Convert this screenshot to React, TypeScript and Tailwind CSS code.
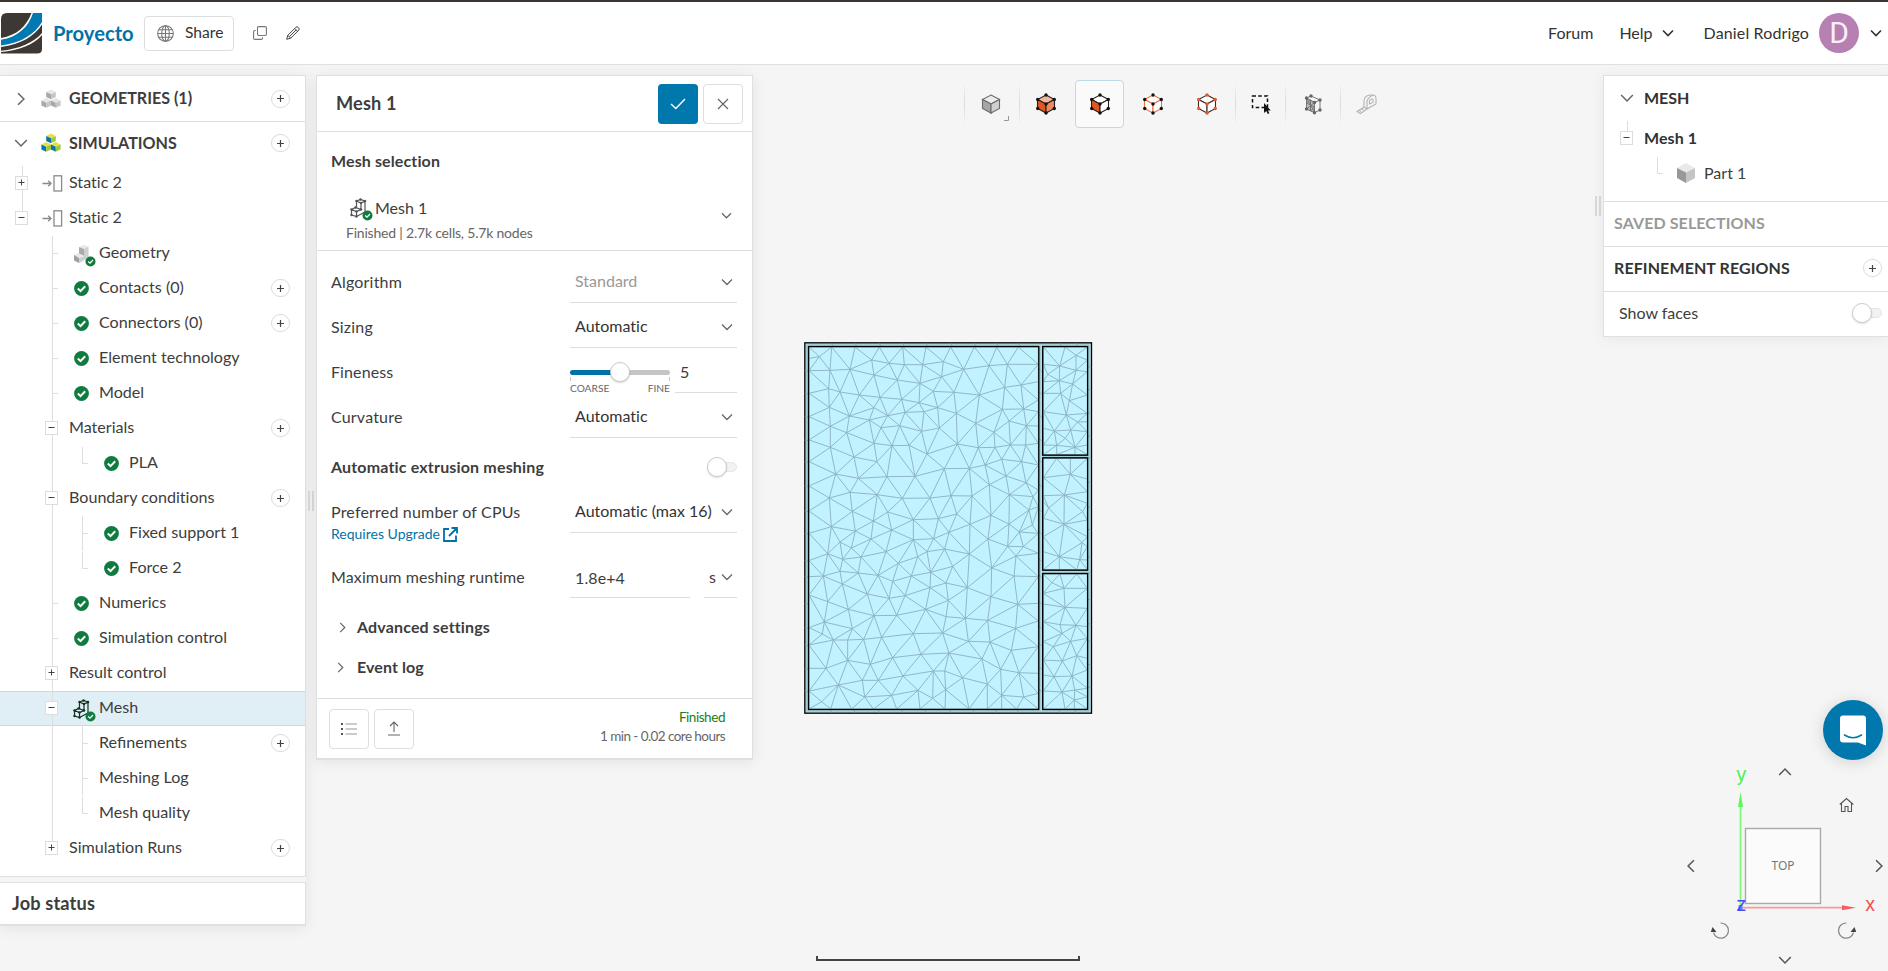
import React from "react";

type Pt = [number, number];

/* ---------- mesh geometry ---------- */

const MAIN: Pt[] = [
  [57,51],[125,51],[195,51],[268,51],[338,51],[408,51],[482,51],[553,51],[620,51],[685,51],[745,51],
  [57,85],[57,122],[57,190],[57,260],[57,330],[57,395],[57,468],[57,543],[57,610],[57,692],[57,740],[57,795],[57,893],[57,945],[57,1015],[57,1083],[57,1137],
  [745,103],[745,155],[745,210],[745,245],[745,288],[745,340],[745,405],[745,480],[745,530],[745,610],[745,670],[745,740],[745,820],[745,873],[745,950],[745,1030],[745,1090],
  [122,1137],[185,1137],[250,1137],[320,1137],[390,1137],[465,1137],[537,1137],[592,1137],[635,1137],[680,1137],[745,1137],
  [88,80],[120,121],[180,118],[245,90],[297,100],[252,135],[343,104],[398,104],[460,95],[322,150],[455,140],[390,160],[521,118],[597,107],[652,103],[644,172],[693,165],
  [116,176],[150,186],[208,195],[270,202],[335,208],[387,218],[430,184],[492,187],[568,195],
  [118,232],[178,258],[252,233],[293,257],[345,247],[402,245],[443,233],[499,250],[637,238],[701,237],
  [121,289],[170,308],[238,270],[273,293],[329,287],[395,304],[448,294],[557,280],[657,273],[612,307],[709,287],
  [121,352],[192,381],[252,340],[306,347],[357,346],[411,372],[502,342],[565,353],[615,352],[661,345],[707,345],
  [261,395],[137,432],[205,445],[291,440],[375,439],[463,416],[538,415],[585,405],[635,388],[695,395],[648,438],[598,464],[708,458],
  [118,504],[180,487],[262,494],[337,505],[420,504],[483,497],[546,498],[658,494],[729,500],
  [187,544],[293,546],[250,573],[124,590],[196,603],[370,569],[445,566],[500,552],[603,556],[717,540],[540,583],[305,600],[657,582],[727,585],
  [243,627],[150,636],[370,629],[431,626],[477,607],[594,627],[688,606],[653,649],[700,650],
  [113,671],[158,688],[184,654],[213,681],[288,665],[325,700],[383,680],[411,665],[464,657],[538,672],[678,678],[488,709],[605,714],
  [100,738],[150,724],[157,762],[205,729],[264,736],[308,754],[364,738],[422,727],[420,773],[468,759],[532,773],[672,738],
  [113,815],[175,838],[232,792],[297,805],[345,797],[475,811],[407,838],[603,800],[683,823],
  [103,876],[187,896],[252,857],[320,856],[526,865],[468,860],[593,871],[677,895],
  [97,912],[130,930],[173,930],[221,928],[275,922],[370,911],[458,909],[535,934],[600,936],[664,961],
  [108,1015],[173,991],[241,1003],[308,983],[393,973],[477,969],[576,987],[632,1018],[687,1028],
  [145,1065],[217,1051],[265,1051],[339,1038],[430,1023],[464,1023],[518,1043],[592,1062],
  [95,1115],[224,1101],[305,1096],[384,1081],[467,1079],[428,1105],[635,1096],[701,1101],
];

const CELL_TOP: Pt[] = [
  [760,51],[825,51],[892,51],[760,103],[760,155],[760,190],[760,245],[760,295],[760,345],[760,374],
  [892,90],[892,125],[892,195],[892,250],[892,275],[892,305],[892,345],[892,374],[800,374],[855,374],
  [858,76],[809,108],[858,121],[773,133],[808,152],[848,162],[812,190],[838,212],[829,255],[863,276],[842,300],[793,303],[826,325],[800,346],[855,352],
];

const CELL_MID: Pt[] = [
  [760,385],[800,385],[841,385],[892,385],[760,443],[760,497],[760,515],[760,565],[760,620],[760,665],[760,719],
  [892,447],[892,485],[892,520],[892,570],[892,620],[892,650],[892,690],[892,719],[808,719],[860,719],
  [841,433],[823,495],[776,534],[878,545],[822,583],[808,680],[876,638],[869,689],
];

const CELL_BOTTOM: Pt[] = [
  [760,732],[810,732],[860,732],[892,732],[760,790],[760,822],[760,875],[760,935],[760,990],[760,1035],[760,1083],[760,1137],
  [892,775],[892,835],[892,890],[892,925],[892,985],[892,1020],[892,1075],[892,1100],[892,1137],[825,1137],[853,1137],
  [785,758],[822,775],[825,832],[858,886],[810,884],[816,910],[842,934],[790,950],[817,993],[860,977],[792,1040],[846,1038],[816,1086],[853,1110],[854,1080],
];

/* Bowyer-Watson triangulation, returned as one path of unique edges. */
function triangulate(pts: Pt[]): string {
  const n = pts.length;
  const p: Pt[] = [...pts, [-9000, -9000], [11000, -9000], [500, 15000]];
  let tris: number[][] = [[n, n + 1, n + 2]];
  const inside = (t: number[], q: Pt) => {
    const [a, b, c] = t.map((i) => p[i]);
    const d = 2 * (a[0] * (b[1] - c[1]) + b[0] * (c[1] - a[1]) + c[0] * (a[1] - b[1]));
    if (Math.abs(d) < 1e-9) return true;
    const s = (v: Pt) => v[0] * v[0] + v[1] * v[1];
    const ux = (s(a) * (b[1] - c[1]) + s(b) * (c[1] - a[1]) + s(c) * (a[1] - b[1])) / d;
    const uy = (s(a) * (c[0] - b[0]) + s(b) * (a[0] - c[0]) + s(c) * (b[0] - a[0])) / d;
    return Math.hypot(q[0] - ux, q[1] - uy) < Math.hypot(a[0] - ux, a[1] - uy) - 1e-7;
  };
  for (let i = 0; i < n; i++) {
    const bad = tris.filter((t) => inside(t, p[i]));
    const count = new Map<string, number[]>();
    const dup = new Set<string>();
    bad.forEach((t) =>
      [[t[0], t[1]], [t[1], t[2]], [t[2], t[0]]].forEach((e) => {
        const k = Math.min(e[0], e[1]) + "-" + Math.max(e[0], e[1]);
        if (count.has(k)) dup.add(k);
        count.set(k, e);
      }),
    );
    tris = tris.filter((t) => !bad.includes(t));
    count.forEach((e, k) => {
      if (!dup.has(k)) tris.push([e[0], e[1], i]);
    });
  }
  const edges = new Set<string>();
  tris
    .filter((t) => t.every((i) => i < n))
    .forEach((t) =>
      [[t[0], t[1]], [t[1], t[2]], [t[2], t[0]]].forEach(([a, b]) =>
        edges.add(Math.min(a, b) + "-" + Math.max(a, b)),
      ),
    );
  return [...edges]
    .map((e) => {
      const [a, b] = e.split("-").map(Number);
      return `M${p[a][0]} ${p[a][1]}L${p[b][0]} ${p[b][1]}`;
    })
    .join("");
}

const MESH_PATH = [MAIN, CELL_TOP, CELL_MID, CELL_BOTTOM].map(triangulate).join("");
const TICKS = [
  ...[125,195,268,338,408,482,553,620,685,810,858].map((x) => `M${x} 40L${x + 5} 50M${x - 4} 1138L${x} 1148`),
  ...[122,190,260,330,395,468,543,610,692,740,820,893,945,1015,1083].map((y) => `M44 ${y}L56 ${y + 2}M893 ${y - 12}L904 ${y - 10}M746 ${y - 6}L757 ${y + 4}`),
].join("");

function MeshView() {
  return (
    <svg width="320" height="400" viewBox="0 0 960 1200" fill="none">
      <rect x="44.5" y="38.5" width="860" height="1111" fill="#b9e9f2" stroke="#000" strokeWidth="4" />
      <path d="M50 44H899V1144H50ZM752 46V1142M758 380H896M758 726H896" stroke="#93bac1" strokeWidth="2" />
      <path d={TICKS} stroke="#7fa5ab" strokeWidth="2" />
      <g fill="#c0f2ff">
        <rect x="55.5" y="49.5" width="691" height="1089" />
        <rect x="758" y="49.5" width="135" height="326" />
        <rect x="758" y="383.5" width="135" height="337" />
        <rect x="758" y="730.5" width="135" height="408" />
      </g>
      <path d={MESH_PATH} stroke="#8db4bd" strokeWidth="2.8" />
      <g stroke="#000" strokeWidth="4.2">
        <rect x="55.5" y="49.5" width="691" height="1089" />
        <rect x="758" y="49.5" width="135" height="326" />
        <rect x="758" y="383.5" width="135" height="337" />
        <rect x="758" y="730.5" width="135" height="408" />
      </g>
    </svg>
  );
}

/* ---------- icons ---------- */

function Chevron({ dir = "down", w = 12, color = "#666", sw = 1.3 }: { dir?: "down" | "right" | "left" | "up"; w?: number; color?: string; sw?: number }) {
  const d = {
    down: "M1 3.5L6 8.5L11 3.5",
    up: "M1 8.5L6 3.5L11 8.5",
    right: "M3.5 1L8.5 6L3.5 11",
    left: "M8.5 1L3.5 6L8.5 11",
  }[dir];
  return (
    <svg width={w} height={w} viewBox="0 0 12 12" fill="none" stroke={color} strokeWidth={sw} className="shrink-0">
      <path d={d} />
    </svg>
  );
}

function Plus() {
  return (
    <span className="flex h-[18px] w-[19px] shrink-0 items-center justify-center rounded-full border border-[#d9dcde] bg-white">
      <svg width="7" height="7" viewBox="0 0 7 7" stroke="#444" strokeWidth="1.2">
        <path d="M3.5 0V7M0 3.5H7" />
      </svg>
    </span>
  );
}

function Check() {
  return (
    <svg width="15" height="15" viewBox="0 0 15 15" fill="none">
      <circle cx="7.5" cy="7.5" r="7.4" fill="#0f7b3f" />
      <path d="M3.8 7.6L6.5 10.1L11.2 5.2" stroke="#fff" strokeWidth="2" />
    </svg>
  );
}

function Badge() {
  return (
    <g>
      <circle cx="17.5" cy="17.5" r="5" fill="#0f7b3f" />
      <path d="M15.2 17.6L17 19.2L20 16" stroke="#fff" strokeWidth="1.3" fill="none" />
    </g>
  );
}

function Cube({ x, y, s, c }: { x: number; y: number; s: number; c: [string, string, string] }) {
  const h = s * 0.5;
  const b = s * 1.05;
  return (
    <g>
      <path d={`M${x} ${y}L${x + s} ${y + h}L${x} ${y + h * 2}L${x - s} ${y + h}Z`} fill={c[0]} />
      <path d={`M${x - s} ${y + h}L${x} ${y + h * 2}V${y + h * 2 + b}L${x - s} ${y + h + b}Z`} fill={c[1]} />
      <path d={`M${x + s} ${y + h}L${x} ${y + h * 2}V${y + h * 2 + b}L${x + s} ${y + h + b}Z`} fill={c[2]} />
    </g>
  );
}

function Cubes({ c }: { c: [string, string, string] }) {
  return (
    <svg width="20" height="20" viewBox="0 0 20 20">
      <Cube x={10} y={0.5} s={4.8} c={c} />
      <Cube x={5.2} y={9} s={4.8} c={c} />
      <Cube x={14.8} y={9} s={4.8} c={c} />
    </svg>
  );
}

function GeometryIcon() {
  return (
    <svg width="24" height="24" viewBox="0 0 24 24">
      <path d="M6 3L10.5 1L15.5 2.5L11 5Z" fill="#e8e8e8" />
      <path d="M6 3L11 5V12L6 10Z" fill="#a9a9a9" />
      <path d="M11 5L15.5 2.5V14L6 19V14L11 12Z" fill="#cfcfcf" />
      <path d="M1 11L5.500 9L11 12L6 14Z" fill="#e8e8e8" />
      <path d="M1 11L6 14V19L1 16.500Z" fill="#a0a0a0" />
      <Badge />
    </svg>
  );
}

function MeshIcon({ color }: { color: string }) {
  return (
    <svg width="24" height="24" viewBox="0 0 24 24" fill="none">
      <g stroke={color} strokeWidth="1.2">
        <path d="M6.500 3L10.500 1.500L15 3L11 5ZM6.500 3V9.500M11 5V11.500M15 3V14L6.500 18.500M1.500 11.500L5.500 9.500L11 11.500L6.500 13.500ZM1.500 11.500V17L6.500 18.500V13.500" />
      </g>
      <g fill={color}>
        {[[6.5,3],[10.5,1.5],[15,3],[11,5],[1.5,11.5],[6.5,13.5],[11,11.5],[6.5,18.5],[1.5,17],[5.5,9.5]].map(([x, y]) => (
          <circle key={`${x}-${y}`} cx={x} cy={y} r="1.200" />
        ))}
      </g>
      <Badge />
    </svg>
  );
}

function StaticIcon() {
  return (
    <svg width="21" height="17" viewBox="0 0 21 17" fill="none" stroke="#8a8a8a" strokeWidth="1.300">
      <path d="M0.500 8.500H9M6.200 5.800L9 8.500L6.200 11.200" />
      <rect x="12" y="0.800" width="7.600" height="15.200" />
    </svg>
  );
}

function Logo() {
  return (
    <svg width="41" height="41" viewBox="0 0 41 41">
      <defs>
        <clipPath id="logo">
          <path d="M6 0H41V36Q41 40.500 36 40.500H0V6Q0 0 6 0Z" />
        </clipPath>
      </defs>
      <g clipPath="url(#logo)">
        <rect width="41" height="41" fill="#fff" />
        <path d="M0 0H30.500C25.500 13 16 22.500 0 25Z" fill="#3e3835" />
        <path d="M32 0H41V9C34 21 20 30 0 32.500V26.800C17 24 27.500 14 32 0Z" fill="#0279b1" />
        <path d="M41 11.500V20C33 29.500 18 36 0 37.800V34C20 31.500 33.500 23 41 11.500Z" fill="#3e3835" />
        <path d="M41 22V41H0V39C18 37.500 33 31.500 41 22Z" fill="#3e3835" />
      </g>
    </svg>
  );
}

/* ---------- tree ---------- */

type Guide = "" | "line" | "tick" | "end" | "plus" | "minus" | "plusEnd" | "minusOnly";

function GuideCell({ g }: { g: Guide }) {
  const box = g.startsWith("plus") || g.startsWith("minus");
  const d = {
    "": "",
    line: "M15.500 0V35",
    tick: "M15.500 0V35M15.500 17.500H21",
    end: "M15.500 1V17.500H21",
    plus: "M15.500 0V35",
    minus: "M15.500 0V35",
    plusEnd: "M15.500 0V17",
    minusOnly: "M15.500 0V17",
  }[g];
  return (
    <svg width="30" height="35" viewBox="0 0 30 35" fill="none" className="shrink-0">
      <path d={d} stroke="#dcdedf" />
      {box && (
        <>
          <rect x="8.500" y="10.500" width="12" height="13" fill="#fff" stroke="#dcdcdc" />
          <path d={g.startsWith("plus") ? "M11.500 16.500H17.500M14.500 13.500V19.500" : "M11.500 16.500H17.500"} stroke="#444" />
        </>
      )}
    </svg>
  );
}

interface Row {
  g: Guide[];
  icon?: "static" | "check" | "geo" | "mesh";
  label: string;
  add?: boolean;
  active?: boolean;
}

const ROWS: Row[] = [
  { g: ["plus"], icon: "static", label: "Static 2" },
  { g: ["minusOnly"], icon: "static", label: "Static 2" },
  { g: ["", "tick"], icon: "geo", label: "Geometry" },
  { g: ["", "tick"], icon: "check", label: "Contacts (0)", add: true },
  { g: ["", "tick"], icon: "check", label: "Connectors (0)", add: true },
  { g: ["", "tick"], icon: "check", label: "Element technology" },
  { g: ["", "tick"], icon: "check", label: "Model" },
  { g: ["", "minus"], label: "Materials", add: true },
  { g: ["", "line", "end"], icon: "check", label: "PLA" },
  { g: ["", "minus"], label: "Boundary conditions", add: true },
  { g: ["", "line", "tick"], icon: "check", label: "Fixed support 1" },
  { g: ["", "line", "end"], icon: "check", label: "Force 2" },
  { g: ["", "tick"], icon: "check", label: "Numerics" },
  { g: ["", "tick"], icon: "check", label: "Simulation control" },
  { g: ["", "plus"], label: "Result control" },
  { g: ["", "minus"], icon: "mesh", label: "Mesh", active: true },
  { g: ["", "line", "tick"], label: "Refinements", add: true },
  { g: ["", "line", "tick"], label: "Meshing Log" },
  { g: ["", "line", "end"], label: "Mesh quality" },
  { g: ["", "plusEnd"], label: "Simulation Runs", add: true },
];

function TreeRow({ row }: { row: Row }) {
  return (
    <div className={row.active ? "flex h-[35px] bg-[#e0eef5] pl-[7px] pr-[15px] shadow-[inset_0_1px_0_#c3dce6,inset_0_-1px_0_#c3dce6]" : "flex h-[35px] pl-[7px] pr-[15px]"}>
      {row.g.map((g, i) => (
        <GuideCell key={i} g={g} />
      ))}
      <div className="flex h-[34px] grow items-center">
        {row.icon && (
          <span className="flex w-[30px] shrink-0 items-center justify-center">
            {row.icon === "static" && <StaticIcon />}
            {row.icon === "check" && <span className="mr-[1px]"><Check /></span>}
            {row.icon === "geo" && <span className="ml-[6px] mt-[5px] shrink-0"><GeometryIcon /></span>}
            {row.icon === "mesh" && <span className="ml-[6px] mt-[5px] shrink-0"><MeshIcon color="#12331f" /></span>}
          </span>
        )}
        <span className={row.label.includes("fi") ? "ml-[2px] grow whitespace-nowrap pb-px [font-variant-ligatures:normal]" : "ml-[2px] grow whitespace-nowrap pb-px"}>{row.label}</span>
        {row.add && <Plus />}
      </div>
    </div>
  );
}

function Sidebar() {
  return (
    <div className="w-[306px] shrink-0">
      <div className="h-[802px] border border-l-0 border-[#e0e0e0] bg-white text-[16.1px]">
        <div className="flex h-[46px] items-center border-b border-[#dedede] pl-[14px] pr-[15px] font-bold">
          <Chevron dir="right" w={14} />
          <span className="ml-[13px]"><Cubes c={["#e6e6e6", "#a8a8a8", "#c6c6c6"]} /></span>
          <span className="ml-[8px] grow pb-px">GEOMETRIES (1)</span>
          <Plus />
        </div>
        <div className="flex h-[44px] items-center pb-[2px] pl-[14px] pr-[15px] font-bold">
          <Chevron w={14} />
          <span className="ml-[13px]"><Cubes c={["#e3e04a", "#0b73ad", "#a4c63f"]} /></span>
          <span className="ml-[8px] grow">SIMULATIONS</span>
          <Plus />
        </div>
        {ROWS.map((r, i) => (
          <TreeRow key={i} row={r} />
        ))}
      </div>
      <div className="mt-[5px] flex h-[44px] items-center border border-b-2 border-l-0 border-[#e0e0e0] bg-white pl-3 text-[18.2px] font-bold tracking-[0.15px]">
        Job status
      </div>
    </div>
  );
}

/* ---------- settings panel ---------- */

function Switch() {
  return (
    <span className="flex h-5 w-[30px] items-center rounded-full">
      <span className="z-10 h-5 w-5 shrink-0 rounded-full border border-[#ccc] bg-white shadow-[0_1px_2px_rgba(0,0,0,0.15)]" />
      <span className="-ml-1 h-[10px] w-[14px] shrink-0 rounded-r-full border border-[#e6e6e6] bg-[#f2f2f2]" />
    </span>
  );
}

function Field({ label, value, muted }: { label: string; value: string; muted?: boolean }) {
  return (
    <div className="flex h-[45px] items-end justify-between">
      <span className="flex h-10 items-center pb-[3px] tracking-[0.19px]">{label}</span>
      <span className="flex h-10 w-[167px] items-center justify-between border-b border-[#dedede] pb-[2px] pl-[5px] pr-[4px]">
        <span className={muted ? "whitespace-nowrap pb-px text-[#999]" : "whitespace-nowrap pb-px text-[#333]"}>{value}</span>
        <Chevron w={12} />
      </span>
    </div>
  );
}

function MeshPanel() {
  return (
    <div className="flex h-[685px] w-[437px] shrink-0 flex-col border border-b-2 border-[#e0e0e0] bg-white">
      <div className="flex h-[56px] items-center border-b border-[#dedede] pl-[19px] pr-[9px]">
        <span className="grow text-[18.2px] font-bold tracking-[0.15px]">Mesh 1</span>
        <span className="mr-[5px] flex h-10 w-10 items-center justify-center rounded-[4px] bg-[#0077ad]">
          <svg width="16" height="12" viewBox="0 0 16 12" fill="none" stroke="#fff" strokeWidth="1.400"><path d="M1 6L5.800 10.500L15 1" /></svg>
        </span>
        <span className="flex h-10 w-10 items-center justify-center rounded-[4px] border border-[#dedede]">
          <svg width="12" height="12" viewBox="0 0 12 12" stroke="#666" strokeWidth="1.200"><path d="M1 1L11 11M11 1L1 11" /></svg>
        </span>
      </div>
      <div className="flex h-[119px] flex-col border-b border-[#dedede]">
        <div className="pl-[14px] pt-[17px] font-bold tracking-[0.12px]">Mesh selection</div>
        <div className="mt-[21px] flex items-center pl-[29px] pr-[20px]">
          <div className="grow">
            <div className="flex h-7 items-center pl-[4px]">
              <span className="mt-1 w-[25px]"><MeshIcon color="#555" /></span>
              <span>Mesh 1</span>
            </div>
            <div className="text-sm leading-[22px] tracking-[-0.2px] text-[#666]">Finished | 2.7k cells, 5.7k nodes</div>
          </div>
          <span className="mb-[7px]"><Chevron w={11} /></span>
        </div>
      </div>
      <div className="flex grow flex-col pl-[14px] pr-[15px] pt-[7px]">
        <Field label="Algorithm" value="Standard" muted />
        <Field label="Sizing" value="Automatic" />
        <div className="flex h-[45px] items-end justify-between">
          <span className="flex h-10 items-center pb-[3px] tracking-[0.1px]">Fineness</span>
          <div className="flex h-10 w-[167px]">
            <div className="flex w-[100px] flex-col">
              <div className="mt-[9px] flex h-5 items-center">
                <span className="h-[5px] w-[42px] rounded-l-full bg-[#0072a8]" />
                <span className="z-10 -mx-[2px] h-5 w-5 shrink-0 rounded-full border border-[#ccc] bg-white shadow-[0_1px_2px_rgba(0,0,0,0.2)]" />
                <span className="h-[5px] w-[42px] rounded-r-full bg-[#c6c6c6]" />
              </div>
              <div className="-mt-[5px] flex h-[4px] shrink-0 justify-between border-x border-[#c6c6c6]" />
              <div className="flex justify-between text-[10.2px] leading-[14px] text-[#666]"><span>COARSE</span><span>FINE</span></div>
            </div>
            <span className="ml-[5px] flex grow items-center border-b border-[#dedede] pb-px pl-[5px]">5</span>
          </div>
        </div>
        <Field label="Curvature" value="Automatic" />
        <div className="mt-[10px] flex h-[40px] items-center justify-between pb-[2px] font-bold tracking-[0.17px]">
          Automatic extrusion meshing
          <Switch />
        </div>
        <Field label="Preferred number of CPUs" value="Automatic (max 16)" />
        <div className="-mt-[10px] flex h-[22px] items-center text-sm text-[#0072a8]">
          Requires Upgrade
          <svg width="15" height="15" viewBox="0 0 15 15" fill="none" stroke="#0072a8" strokeWidth="1.800" className="ml-[3px]"><path d="M6 2H1V14H13V8.500M8.500 1H14V6.500M14 1L6 9" /></svg>
        </div>
        <div className="mt-[13px] flex h-[40px] shrink-0 items-end">
          <span className="flex h-10 w-[239px] items-center pb-[2px] tracking-[0.12px]">Maximum meshing runtime</span>
          <span className="flex h-10 w-[120px] items-center border-b border-[#dedede] pl-[5px] tracking-[0.1px]">1.8e+4</span>
          <span className="ml-[14px] flex h-10 w-[33px] items-center justify-between border-b border-[#dedede] pb-[2px] pl-[5px] pr-[4px]">s<Chevron w={12} /></span>
        </div>
        <div className="mt-[10px] flex h-10 items-center pb-[2px] pl-[6px] font-bold tracking-[0.15px]"><span className="w-5"><Chevron dir="right" w={11} /></span>Advanced settings</div>
        <div className="flex h-10 items-center pb-[2px] pl-[4px] font-bold tracking-[0.1px]"><span className="w-[22px]"><Chevron dir="right" w={11} /></span>Event log</div>
      </div>
      <div className="flex h-[60px] shrink-0 items-center border-t border-[#dedede] pl-[12px] pr-[27px]">
        <span className="mr-[5px] flex h-10 w-10 items-center justify-center rounded-[4px] border border-[#dedede]">
          <svg width="16" height="12" viewBox="0 0 16 12" strokeWidth="1.600"><path d="M4.500 1H16M4.500 6H16M4.500 11H16" stroke="#bbb" /><path d="M0 1H2M0 6H2M0 11H2" stroke="#555" strokeWidth="2" /></svg>
        </span>
        <span className="flex h-10 w-10 items-center justify-center rounded-[4px] border border-[#dedede]">
          <svg width="12" height="15" viewBox="0 0 12 15" fill="none" stroke="#666" strokeWidth="1.100"><path d="M6 11V1M2 5L6 1L10 5M0 14H12" /></svg>
        </span>
        <div className="grow pb-[3px] text-right text-[13.5px] leading-[19px] tracking-[-0.56px]">
          <div className="text-[#178017] tracking-[-0.45px]">Finished</div>
          <div className="text-[#666]">1 min - 0.02 core hours</div>
        </div>
      </div>
    </div>
  );
}

/* ---------- viewport toolbar ---------- */

function ToolCube({ line, dot, top = "none", left = "none", right = "none" }: { line: string; dot?: string; top?: string; left?: string; right?: string }) {
  return (
    <svg width="20" height="22" viewBox="0 0 20 22" fill="none">
      <g stroke={line} strokeWidth="1.100">
        <path d="M10 2L18.500 6.500L10 11L1.500 6.500Z" fill={top} />
        <path d="M1.500 6.500L10 11V20L1.500 15.500Z" fill={left} />
        <path d="M18.500 6.500L10 11V20L18.500 15.500Z" fill={right} />
      </g>
      {dot && (
        <g fill={dot}>
          {[[10,2],[18.3,6.5],[10,11],[1.7,6.5],[10,20],[1.7,15.5],[18.3,15.5]].map(([x, y]) => (
            <circle key={`${x}-${y}`} cx={x} cy={y} r="1.700" />
          ))}
        </g>
      )}
    </svg>
  );
}

function Divider() {
  return <span className="h-[46px] w-px shrink-0 bg-linear-to-b from-[#f5f5f5] via-[#dadada] to-[#f5f5f5]" />;
}

function Tool({ children, w = "w-[53px]" }: { children: React.ReactNode; w?: string }) {
  return <span className={`${w} flex h-12 shrink-0 items-center justify-center`}>{children}</span>;
}

function Toolbar() {
  return (
    <div className="ml-[211px] mt-[5px] flex h-12 items-center">
      <Divider />
      <Tool w="w-[54px]">
        <span className="ml-[6px]"><ToolCube line="#6b6b6b" top="#ececec" left="#a6a6a6" right="#d0d0d0" /></span>
        <svg width="5" height="5" viewBox="0 0 5 5" className="ml-[3px] mt-[29px]" fill="none" stroke="#999"><path d="M0 4.500H4.500V0" /></svg>
      </Tool>
      <Divider />
      <Tool w="w-[51px]"><ToolCube line="#222" dot="#111" top="#f6b59a" left="#e2571f" right="#f08a5d" /></Tool>
      <span className="ml-[4px] mr-[2px] flex h-12 w-[49px] shrink-0 items-center justify-center rounded-[4px] border border-[#bddbe7] bg-[#fafafa]">
        <ToolCube line="#222" dot="#111" left="#e2571f" top="#fff" right="#fff" />
      </span>
      <Tool w="w-[54px]"><ToolCube line="#e8744a" dot="#111" top="#fff" left="#fff" right="#fff" /></Tool>
      <Tool w="w-[54px]"><ToolCube line="#3b2a25" dot="#e05a2b" top="#fff" left="#fff" right="#fff" /></Tool>
      <Tool w="w-[1px]"><span /></Tool>
      <Divider />
      <Tool w="w-[49px]">
        <svg width="20" height="20" viewBox="0 0 20 20" fill="none" className="ml-[1px]">
          <rect x="1.500" y="2" width="15" height="11.500" stroke="#111" strokeWidth="1.500" strokeDasharray="3.500 2.300" />
          <path d="M13 9V19L15.300 17L16.800 20L18.300 19.300L17 16.500H19.800Z" fill="#111" />
        </svg>
      </Tool>
      <Divider />
      <Tool w="w-[54px]">
        <svg width="18" height="21" viewBox="0 0 18 21" fill="none" stroke="#777" strokeWidth="1">
          <path d="M2.500 4L7 2L16 6L10.500 8.500ZM2.500 4V15L10.500 18.500V8.500M16 6V16L10.500 18.500" />
          <path d="M2.500 4L10.500 8.500V18.500L2.500 15Z" fill="#bdbdbd" />
          <path d="M2.500 9L10.500 13M2.500 15L10.500 8.500M6.500 6V17M2.500 9L6.500 6M6.500 17L10.500 13M2.500 4L10.500 18" />
          <g fill="#666" stroke="none">
            {[[2.5,4],[7,2],[16,6],[10.5,8.5],[2.500,15],[10.5,18.8],[16,16]].map(([x, y]) => <circle key={`${x}-${y}`} cx={x} cy={y} r="1.700" />)}
          </g>
        </svg>
      </Tool>
      <Divider />
      <Tool w="w-[51px]">
        <svg width="21" height="21" viewBox="0 0 21 21" fill="none" stroke="#b3b3b3" strokeWidth="1.100">
          <path d="M8 13V7C8 3.500 11 1 14 1H17C19.500 1 20 3 20 5V10L11 15L8 13M11 15V8C11 5 13 3 17 1M8 13L1 17.500L4.500 19.500L11 15M13.500 10V7C13.500 5.500 17 4 17 6V8.500ZM3 16.300L5 17.500M5.500 14.800L7.500 16" />
        </svg>
      </Tool>
    </div>
  );
}

function Rotate({ flip }: { flip?: boolean }) {
  return (
    <svg width="20" height="18" viewBox="0 0 20 18" fill="none" className={flip ? "-scale-x-100" : ""}>
      <path d="M10.500 1A7.600 7.600 0 1 1 3.500 10.500" stroke="#888" strokeWidth="1.200" />
      <path d="M2.500 5L6.500 10H0.800Z" fill="#444" />
    </svg>
  );
}

function ViewCube() {
  return (
    <div className="absolute right-0 top-[700px] h-[206px] w-[204px]">
      <svg width="204" height="206" viewBox="0 0 204 206" fill="none" className="absolute inset-0">
        <path d="M56.500 143V38" stroke="#7dfb7d" strokeWidth="1.800" />
        <path d="M56.500 27L54 42H59Z" fill="#5cf75c" />
        <path d="M57 142.700H162" stroke="#f79a9a" strokeWidth="1.800" />
        <path d="M172 142.700L158 140.200V145.200Z" fill="#f55f5f" />
        <rect x="61.500" y="63.500" width="75" height="75" fill="#fbfbfb" stroke="#a9a9a9" strokeWidth="1.400" />
        <path d="M155.800 39.500L162.500 33.500L169.300 39.500M157.500 38.500V46.500H161V41.500H164V46.500H167.500V38.500" stroke="#555" strokeWidth="1.100" />
        <rect x="54.500" y="140" width="4" height="5" fill="#5f8cff" />
      </svg>
      <span className="absolute left-[52px] top-[-2px] font-[Inter] text-[19px] leading-6 text-[#4df04d]">y</span>
      <span className="absolute left-[181px] top-[128px] font-[Inter] text-[19px] leading-6 text-[#f55050]">x</span>
      <span className="absolute left-[52px] top-[128px] font-[Inter] text-[19px] leading-6 text-[#4a4af0]">z</span>
      <span className="absolute left-[61px] top-[89px] w-[76px] text-center font-['Noto_Sans'] text-xs leading-6 text-[#777]">TOP</span>
      <span className="absolute left-[94px] top-0"><Chevron dir="up" w={14} color="#555" /></span>
      <span className="absolute left-[94px] top-[188px]"><Chevron w={14} color="#555" /></span>
      <span className="absolute left-0 top-[94px]"><Chevron dir="left" w={14} color="#555" /></span>
      <span className="absolute left-[188px] top-[94px]"><Chevron dir="right" w={14} color="#555" /></span>
      <span className="absolute left-[26px] top-[157px]"><Rotate /></span>
      <span className="absolute left-[153px] top-[157px]"><Rotate flip /></span>
    </div>
  );
}

function RightPanel() {
  return (
    <div className="h-[262px] w-[285px] shrink-0 border border-r-0 border-[#e0e0e0] bg-white shadow-[0_2px_14px_rgba(0,0,0,0.06)]">
      <div className="flex h-[45px] items-center pb-[2px] pl-[16px] font-bold text-[#333]"><Chevron w={14} /><span className="ml-[10px]">MESH</span></div>
      <div className="flex h-[35px] items-center pl-[8px] font-bold text-[#333]"><GuideCell g="minusOnly" /><span className="ml-[2px] pb-[2px] tracking-[0.1px]">Mesh 1</span></div>
      <div className="flex h-[46px] items-start border-b border-[#dedede] pl-[38px]">
        <GuideCell g="end" />
        <span className="flex h-[33px] items-center">
          <svg width="20" height="22" viewBox="0 0 20 22" className="ml-[4px] mt-px">
            <path d="M10 1L19 6L10 10.500L1 6Z" fill="#e9e9e9" /><path d="M1 6L10 10.500V21L1 16Z" fill="#989898" /><path d="M19 6L10 10.500V21L19 16Z" fill="#c4c4c4" />
          </svg>
          <span className="ml-[8px]">Part 1</span>
        </span>
      </div>
      <div className="flex h-[45px] items-center border-b border-[#dedede] pb-[2px] pl-[10px] font-bold tracking-[0.1px] text-[#999]">SAVED SELECTIONS</div>
      <div className="flex h-[45px] items-center justify-between border-b border-[#dedede] pb-[2px] pl-[10px] pr-[6px] font-bold tracking-[0.1px] text-[#333]">REFINEMENT REGIONS<Plus /></div>
      <div className="flex h-[44px] items-center justify-between pb-[2px] pl-[15px] pr-[6px]">Show faces<Switch /></div>
    </div>
  );
}

function Grip({ cls }: { cls: string }) {
  return (
    <span className={`${cls} flex shrink-0 justify-center gap-[2px]`}>
      <span className="h-5 w-[2px] bg-[#d9d9d9]" />
      <span className="h-5 w-[2px] bg-[#d9d9d9]" />
    </span>
  );
}

export default function App() {
  return (
    <div className="flex h-[971px] w-full flex-col overflow-hidden bg-[#f5f5f5] font-[Lato,sans-serif] text-base text-[#3d3d3d] [font-variant-ligatures:none]">
      <header className="flex h-[65px] shrink-0 items-center border-b border-t-2 border-b-[#dfdfdf] border-t-[#3b3431] bg-white pl-px pr-[6px] text-[#333]">
        <Logo />
        <span className="ml-[11px] w-[81px] text-[20.2px] font-bold text-[#0272a6]">Proyecto</span>
        <span className="ml-[10px] flex h-[35px] w-[90px] items-center rounded-[4px] border border-[#dedede] pl-[12px]">
          <svg width="17" height="17" viewBox="0 0 17 17" fill="none" stroke="#777" strokeWidth="1.100"><circle cx="8.500" cy="8.500" r="7.800" /><ellipse cx="8.500" cy="8.500" rx="3.800" ry="7.800" /><path d="M8.500 0.700V16.300M0.700 8.500H16.300M1.800 4.800H15.200M1.800 12.200H15.200" /></svg>
          <span className="ml-[11px] text-[15.6px]">Share</span>
        </span>
        <svg width="14" height="14" viewBox="0 0 14 14" fill="none" stroke="#777" strokeWidth="1.100" className="ml-[19px]"><rect x="4.500" y="0.600" width="8.900" height="8.900" rx="1.200" /><path d="M2.800 4.500H1.800Q0.600 4.500 0.600 5.700V12.200Q0.600 13.400 1.800 13.400H8.300Q9.500 13.400 9.500 12.200V11.200" /></svg>
        <svg width="14" height="14" viewBox="0 0 14 14" fill="none" stroke="#444" strokeWidth="1" className="ml-[19px]"><path d="M0.700 13.300L1.800 9.300L9.800 1.300Q11 0.200 12.200 1.300L12.700 1.800Q13.800 3 12.700 4.200L4.700 12.200ZM8.700 2.400L11.600 5.300M1.800 9.300L4.700 12.200M3.300 10.700L10.200 3.900" /></svg>
        <span className="grow" />
        <span>Forum</span>
        <span className="ml-[26px] mr-[9px]">Help</span>
        <Chevron w={12} color="#333" sw={1.6} />
        <span className="ml-[30px] mr-[10px] tracking-[0.14px]">Daniel Rodrigo</span>
        <span className="mr-[11px] flex h-10 w-10 items-center justify-center rounded-full bg-[#b680b2] font-[Roboto] text-[30px] leading-none text-[#fbeefa]">D</span>
        <Chevron w={12} color="#333" sw={1.6} />
      </header>
      <main className="relative flex grow pt-[10px]">
        <div className="flex h-[860px] shrink-0 items-start">
          <div className="shadow-[0_2px_14px_rgba(0,0,0,0.08)]"><Sidebar /></div>
          <Grip cls="mt-[416px] w-[10px]" />
          <div className="shadow-[0_2px_14px_rgba(0,0,0,0.08)]"><MeshPanel /></div>
        </div>
        <div className="grow"><Toolbar /></div>
        <Grip cls="mt-[121px] w-[11px]" />
        <RightPanel />
        <div className="absolute left-[790px] top-[265px]"><MeshView /></div>
        <div className="absolute left-[816px] top-[891px] h-[5px] w-[264px] border-2 border-t-0 border-[#444]" />
        <ViewCube />
        <span className="absolute left-[1823px] top-[635px] flex h-[60px] w-[60px] items-center justify-center rounded-full bg-[#0077ad] shadow-[0_2px_16px_rgba(0,0,0,0.15)]">
          <svg width="26" height="31" viewBox="0 0 26 31"><path d="M3 0.500H23Q26 0.500 26 3.500V30.500L18 27.500H3Q0 27.500 0 24.500V3.500Q0 0.500 3 0.500Z" fill="#fff" /><path d="M4.500 20Q13 25.500 21.500 20" fill="none" stroke="#0077ad" strokeWidth="1.600" strokeLinecap="round" /></svg>
        </span>
      </main>
    </div>
  );
}
